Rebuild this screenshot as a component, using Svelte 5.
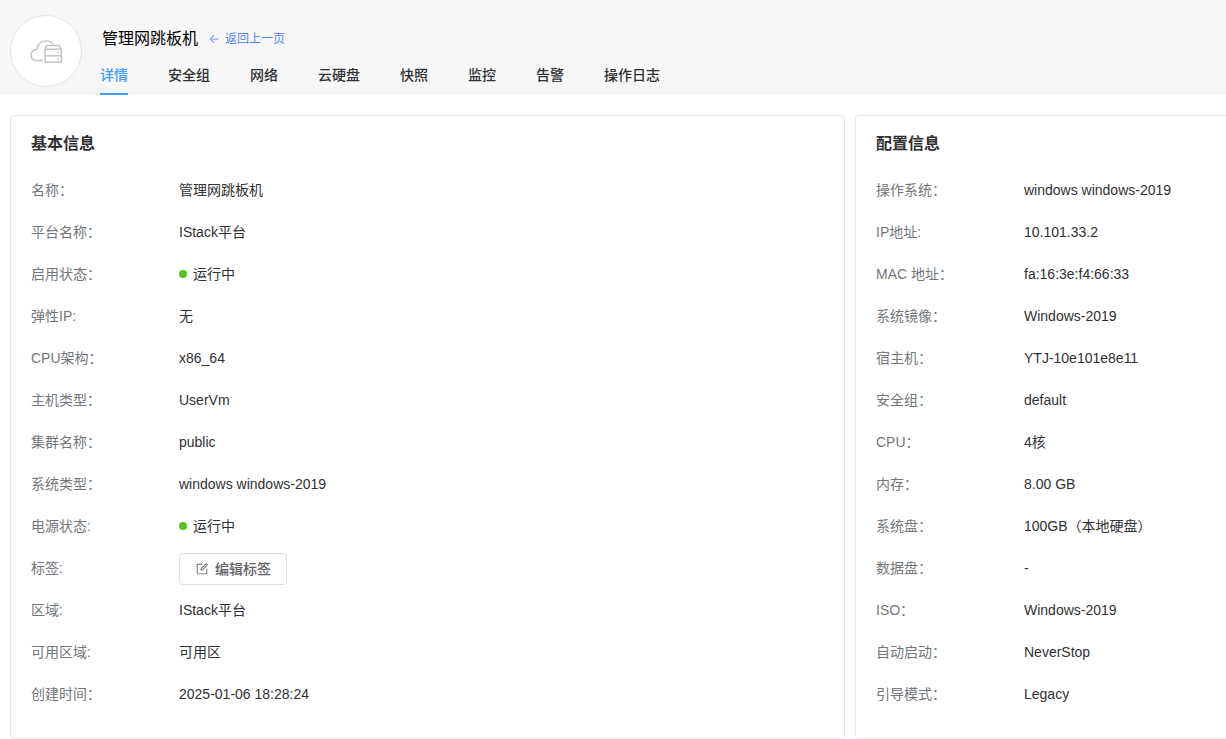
<!-- Cloud host detail page -->
<script>
  const tabs = ["详情", "安全组", "网络", "云硬盘", "快照", "监控", "告警", "操作日志"];
  let active = $state("详情");

  const basic = [
    { label: "名称：", value: "管理网跳板机" },
    { label: "平台名称：", value: "IStack平台" },
    { label: "启用状态：", value: "运行中", type: "status" },
    { label: "弹性IP:", value: "无" },
    { label: "CPU架构：", value: "x86_64" },
    { label: "主机类型：", value: "UserVm" },
    { label: "集群名称：", value: "public" },
    { label: "系统类型：", value: "windows windows-2019" },
    { label: "电源状态:", value: "运行中", type: "status" },
    { label: "标签:", value: "编辑标签", type: "button" },
    { label: "区域:", value: "IStack平台" },
    { label: "可用区域:", value: "可用区" },
    { label: "创建时间：", value: "2025-01-06 18:28:24" },
  ];

  const config = [
    { label: "操作系统：", value: "windows windows-2019" },
    { label: "IP地址:", value: "10.101.33.2" },
    { label: "MAC 地址：", value: "fa:16:3e:f4:66:33" },
    { label: "系统镜像：", value: "Windows-2019" },
    { label: "宿主机：", value: "YTJ-10e101e8e11" },
    { label: "安全组：", value: "default" },
    { label: "CPU：", value: "4核" },
    { label: "内存：", value: "8.00 GB" },
    { label: "系统盘：", value: "100GB（本地硬盘）" },
    { label: "数据盘：", value: "-" },
    { label: "ISO：", value: "Windows-2019" },
    { label: "自动启动：", value: "NeverStop" },
    { label: "引导模式：", value: "Legacy" },
  ];
</script>

{#snippet card(title, rows)}
  <section class="card">
    <h2>{title}</h2>
    {#each rows as row}
      <div class="row">
        <span class="label">{row.label}</span>
        {#if row.type === "button"}
          <button class="edit" type="button">
            <svg viewBox="0 0 1024 1024" width="14" height="14" fill="currentColor">
              <path d="M832 512a32 32 0 1 1 64 0v352a32 32 0 0 1-32 32H160a32 32 0 0 1-32-32V160a32 32 0 0 1 32-32h352a32 32 0 0 1 0 64H192v640h640z" />
              <path d="m469.952 554.24 52.8-7.552L847.104 222.4a32 32 0 1 0-45.248-45.248L477.44 501.44l-7.552 52.8zm422.4-422.4a96 96 0 0 1 0 135.808l-331.84 331.84a32 32 0 0 1-18.112 9.088L436.8 623.68a32 32 0 0 1-36.224-36.224l15.104-105.6a32 32 0 0 1 9.024-18.112l331.904-331.84a96 96 0 0 1 135.744 0z" />
            </svg>
            <span>{row.value}</span>
          </button>
        {:else}
          <span class="value">
            {#if row.type === "status"}<i class="dot"></i>{/if}{row.value}
          </span>
        {/if}
      </div>
    {/each}
  </section>
{/snippet}

<div class="page">
  <header>
    <div class="avatar">
      <svg viewBox="0 0 34 26" width="34" height="26" fill="none" stroke="#c4c4c4" stroke-width="1.5">
        <path d="M14 22.500H7.200A5.300 5.300 0 0 1 2 17.200c0-3 2.300-5.500 5.800-6C8.400 6.500 12 3 16.800 3c3.200 0 6 1.400 7.600 3.600" />
        <path d="M16 11.500l1-3.300q.2-.7 1-.7h11.800q.8 0 1 .7l1.200 3.300M16 11.300h16.300v13H16zM16 17.700h16.300" />
        <path d="M28.300 14.500h1.600M28.300 20.900h1.600" />
      </svg>
    </div>
    <div class="head">
      <div class="title">
        <h1>管理网跳板机</h1>
        <a href="#back" class="back">
          <svg viewBox="0 0 1024 1024" width="12" height="12" fill="currentColor">
            <path d="M224 480h640a32 32 0 1 1 0 64H224a32 32 0 0 1 0-64" />
            <path d="m237.248 512 265.408 265.344a32 32 0 0 1-45.312 45.312l-288-288a32 32 0 0 1 0-45.312l288-288a32 32 0 1 1 45.312 45.312z" />
          </svg>
          <span>返回上一页</span>
        </a>
      </div>
      <nav>
        {#each tabs as tab}
          <button type="button" class="tab" class:active={tab === active} onclick={() => (active = tab)}>{tab}</button>
        {/each}
      </nav>
    </div>
  </header>

  <main>
    {@render card("基本信息", basic)}
    {@render card("配置信息", config)}
  </main>
</div>

<style>
  :global(body) {
    margin: 0;
    overflow: hidden;
    background: #fff;
  }
  .page {
    height: 739px;
    overflow: hidden;
    font-family: "Liberation Sans", "Noto Sans CJK SC", sans-serif;
    font-size: 14px;
    line-height: 22px;
    color: #303133;
  }
  button {
    font-family: inherit;
    font-size: 14px;
    cursor: pointer;
  }

  header {
    display: flex;
    box-sizing: border-box;
    height: 95px;
    padding-left: 10px;
    background: #f7f7f7;
  }
  .avatar {
    display: flex;
    align-items: center;
    justify-content: center;
    box-sizing: border-box;
    width: 72px;
    height: 72px;
    margin-top: 15px;
    border: 1px solid #e4e4e4;
    border-radius: 50%;
    background: #fff;
  }
  .head {
    display: flex;
    flex-direction: column;
    justify-content: space-between;
    margin-left: 18px;
    padding-top: 27px;
  }
  .title {
    display: flex;
    align-items: center;
    height: 24px;
    padding-left: 2px;
  }
  h1 {
    margin: 0;
    font-size: 16px;
    font-weight: 400;
    line-height: 22px;
    color: #000;
  }
  .back {
    display: flex;
    align-items: center;
    gap: 5px;
    margin-left: 10px;
    font-size: 12px;
    color: #5383f7;
    text-decoration: none;
  }
  nav {
    display: flex;
    gap: 40px;
  }
  .tab {
    height: 40px;
    padding: 0;
    border: 0;
    border-bottom: 2px solid transparent;
    background: none;
    font-weight: 500;
    line-height: 40px;
    color: #303133;
  }
  .tab.active {
    border-color: #409eff;
    color: #409eff;
  }

  main {
    display: grid;
    grid-template-columns: 835px 835px;
    gap: 10px;
    padding: 20px 10px 0;
  }
  .card {
    box-sizing: border-box;
    height: 624px;
    padding: 17px 20px 0;
    border: 1px solid #e4e7ed;
    border-radius: 4px;
  }
  h2 {
    height: 22px;
    margin: 0 0 14px;
    font-size: 16px;
    font-weight: 700;
    line-height: 22px;
  }
  .row {
    display: flex;
    align-items: center;
    height: 42px;
  }
  .label {
    width: 148px;
    color: #73767a;
  }
  .value {
    display: flex;
    align-items: center;
  }
  .dot {
    width: 8px;
    height: 8px;
    margin-right: 6px;
    border-radius: 50%;
    background: #52c41a;
  }
  .edit {
    display: flex;
    align-items: center;
    gap: 6px;
    height: 32px;
    margin-top: 2px;
    padding: 0 15px;
    border: 1px solid #dcdfe6;
    border-radius: 4px;
    background: #fff;
    font-weight: 500;
    line-height: 22px;
    color: #606266;
  }
</style>
